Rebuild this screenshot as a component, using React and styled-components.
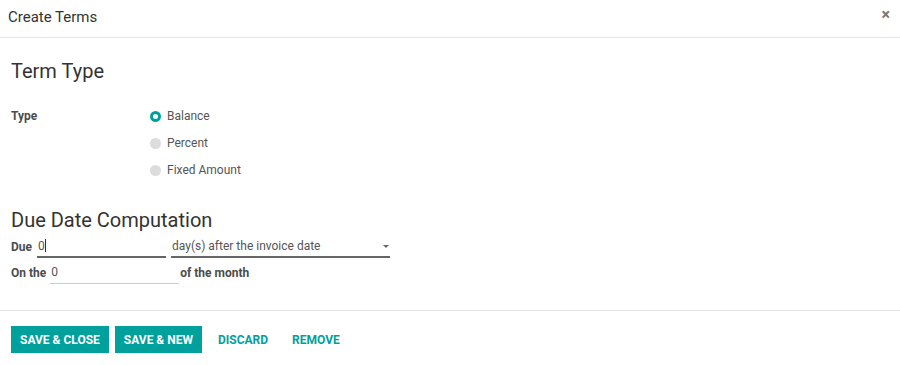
import React from 'react'
import styled, { createGlobalStyle } from 'styled-components'

const Global = createGlobalStyle`
  body {
    margin: 0;
    background: #fff;
    font-family: Roboto, 'Noto Sans', sans-serif;
    color: #4c4c4c;
  }
`

const Dialog = styled.div`
  width: 900px;
  height: 365px;
  display: flex;
  flex-direction: column;
  background: #fff;
`

const Header = styled.div`
  height: 38px;
  box-sizing: border-box;
  border-bottom: 1px solid #e5e5e5;
  display: flex;
  align-items: center;
  justify-content: space-between;
  padding: 0 8px 4px 8px;
`

const Title = styled.h4`
  margin: 0;
  font-size: 15px;
  font-weight: 400;
  color: #333;
`

const Close = styled.span`
  font-size: 16px;
  font-weight: 700;
  color: #777;
  margin-top: -4px;
  margin-right: 2px;
`

const Body = styled.div`
  flex: 1;
  padding: 21px 11px 0 11px;
  box-sizing: border-box;
  border-bottom: 1px solid #e5e5e5;
`

const SectionTitle = styled.div`
  font-size: 20px;
  color: #333;
  margin: ${p => p.$top || 0}px 0 ${p => p.$bottom || 0}px;
  line-height: 24px;
`

const FieldRow = styled.div`
  display: flex;
`

const Label = styled.div`
  width: 138px;
  font-size: 12px;
  font-weight: 700;
  color: #4c4c4c;
  line-height: 16px;
`

const RadioList = styled.div`
  display: flex;
  flex-direction: column;
  gap: 11px;
`

const RadioItem = styled.div`
  display: flex;
  align-items: center;
  gap: 6px;
  font-size: 12px;
  color: #555;
  line-height: 16px;
`

const Dot = styled.span`
  width: 11px;
  height: 11px;
  border-radius: 50%;
  box-sizing: border-box;
  background: ${p => (p.$on ? '#fff' : '#dcdcdc')};
  border: ${p => (p.$on ? '3px solid #00a09d' : 'none')};
  margin-left: 1px;
`

const InlineRow = styled.div`
  display: flex;
  align-items: flex-end;
  gap: ${p => p.$gap || 0}px;
  margin-bottom: ${p => p.$mb || 0}px;
  font-size: 12px;
`

const InlineLabel = styled.span`
  font-weight: 700;
  color: #4c4c4c;
  line-height: 16px;
  padding-bottom: 3px;
  margin-right: ${p => p.$mr || 0}px;
  margin-left: ${p => p.$ml || 0}px;
`

const Input = styled.div`
  width: ${p => p.$w}px;
  box-sizing: border-box;
  border-bottom: ${p => (p.$dark ? '2px solid #666' : '1px solid #ccc')};
  padding: 0 0 ${p => (p.$dark ? 2 : 3)}px 1px;
  line-height: 16px;
  color: #555;
  display: flex;
  align-items: center;
  justify-content: space-between;
`

const Caret = styled.span`
  width: 0;
  height: 0;
  border-left: 3px solid transparent;
  border-right: 3px solid transparent;
  border-top: 3px solid #666;
  margin-right: 1px;
`

const Cursor = styled.span`
  display: inline-block;
  width: 1px;
  height: 13px;
  background: #333;
  vertical-align: -2px;
`

const Footer = styled.div`
  height: 54px;
  box-sizing: border-box;
  display: flex;
  align-items: flex-start;
  padding: 15px 11px 0 11px;
  gap: 6px;
`

const Primary = styled.button`
  background: #00a09d;
  color: #fff;
  border: none;
  height: 27px;
  padding: 0 9px;
  font-family: Roboto, sans-serif;
  font-size: 12px;
  font-weight: 700;
  letter-spacing: 0;
`

const Link = styled.button`
  background: none;
  border: none;
  color: #00a09d;
  height: 27px;
  padding: 0 9px;
  margin-left: ${p => p.$ml || 0}px;
  font-family: Roboto, sans-serif;
  font-size: 12px;
  font-weight: 700;
`

export default function App() {
  return (
    <Dialog>
      <Global />
      <Header>
        <Title>Create Terms</Title>
        <Close>×</Close>
      </Header>
      <Body>
        <SectionTitle $bottom={25}>Term Type</SectionTitle>
        <FieldRow>
          <Label>Type</Label>
          <RadioList>
            <RadioItem><Dot $on />Balance</RadioItem>
            <RadioItem><Dot />Percent</RadioItem>
            <RadioItem><Dot />Fixed Amount</RadioItem>
          </RadioList>
        </FieldRow>
        <SectionTitle $top={30} $bottom={6}>Due Date Computation</SectionTitle>
        <InlineRow $gap={5} $mb={6}>
          <InlineLabel>Due</InlineLabel>
          <Input $w={129} $dark>
            <span>0<Cursor /></span>
          </Input>
          <Input $w={219} $dark>
            <span>day(s) after the invoice date</span>
            <Caret />
          </Input>
        </InlineRow>
        <InlineRow>
          <InlineLabel $mr={4}>On the</InlineLabel>
          <Input $w={129}>0</Input>
          <InlineLabel $ml={1}>of the month</InlineLabel>
        </InlineRow>
      </Body>
      <Footer>
        <Primary>SAVE &amp; CLOSE</Primary>
        <Primary>SAVE &amp; NEW</Primary>
        <Link $ml={1}>DISCARD</Link>
        <Link>REMOVE</Link>
      </Footer>
    </Dialog>
  )
}
